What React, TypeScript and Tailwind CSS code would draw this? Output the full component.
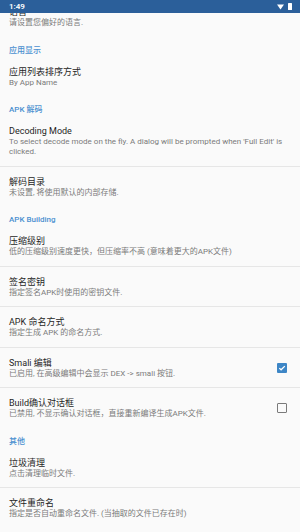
interface Pref {
  title: string;
  summary: string;
  checkbox?: "on" | "off";
}

interface Group {
  category?: string;
  items: Pref[];
}

const groups: Group[] = [
  {
    items: [{ title: "语言", summary: "请设置您偏好的语言." }],
  },
  {
    category: "应用显示",
    items: [{ title: "应用列表排序方式", summary: "By App Name" }],
  },
  {
    category: "APK 解码",
    items: [
      {
        title: "Decoding Mode",
        summary:
          "To select decode mode on the fly. A dialog will be prompted when 'Full Edit' is clicked.",
      },
      { title: "解码目录", summary: "未设置, 将使用默认的内部存储." },
    ],
  },
  {
    category: "APK Building",
    items: [
      { title: "压缩级别", summary: "低的压缩级别速度更快，但压缩率不高 (意味着更大的APK文件)" },
      { title: "签名密钥", summary: "指定签名APK时使用的密钥文件." },
      { title: "APK 命名方式", summary: "指定生成 APK 的命名方式." },
      { title: "Smali 编辑", summary: "已启用, 在高级编辑中会显示 DEX -> smali 按钮.", checkbox: "on" },
      { title: "Build确认对话框", summary: "已禁用, 不显示确认对话框，直接重新编译生成APK文件.", checkbox: "off" },
    ],
  },
  {
    category: "其他",
    items: [
      { title: "垃圾清理", summary: "点击清理临时文件." },
      { title: "文件重命名", summary: "指定是否自动重命名文件. (当抽取的文件已存在时)" },
    ],
  },
];

function CheckBox({ on }: { on: boolean }) {
  if (on) {
    return (
      <div className="w-[10px] h-[10px] rounded-[1px] bg-[#3d86c6] flex items-center justify-center">
        <svg width="8" height="8" viewBox="0 0 8 8">
          <path d="M1.3 4.1 L3.1 5.8 L6.8 2.1" stroke="#fff" strokeWidth="1.3" fill="none" />
        </svg>
      </div>
    );
  }
  return <div className="w-[10px] h-[10px] rounded-[1px] border-[1.5px] border-[#7a7a7a]" />;
}

function PrefRow({ pref }: { pref: Pref }) {
  return (
    <div className="flex items-center pl-[9px] pr-[13px] pt-[9px] pb-[8.5px]">
      <div className="flex-1 min-w-0">
        <div className="text-[9px] leading-[12px] text-[#1f1f1f]">{pref.title}</div>
        <div className="text-[8px] leading-[10px] text-[#7a7a7a]">{pref.summary}</div>
      </div>
      {pref.checkbox && (
        <div className="ml-3 shrink-0">
          <CheckBox on={pref.checkbox === "on"} />
        </div>
      )}
    </div>
  );
}

export default function App() {
  return (
    <div
      className="w-[300px] h-[532px] overflow-hidden bg-[#fafafa] flex flex-col"
      style={{ fontFamily: "Roboto, 'Noto Sans CJK SC', sans-serif" }}
    >
      <div className="h-[13px] shrink-0 bg-[#2b5f9a] flex items-center justify-between pl-[9px] pr-[8px]">
        <span className="text-[8px] font-semibold text-white leading-none">1:49</span>
        <div className="flex items-center gap-[4px]">
          <svg width="7" height="6" viewBox="0 0 7 6">
            <path d="M0 0.5 H7 L3.5 5.5 Z" fill="#fff" />
          </svg>
          <div className="w-[4px] h-[7px] bg-white rounded-[0.5px]" />
        </div>
      </div>

      {/* list is scrolled a little, so the first row sits partly off the top */}
      <div className="flex-1 overflow-hidden">
        <div className="-mt-[16px]">
          {groups.map((g, gi) => (
            <div key={gi}>
              {g.category && (
                <div className="pl-[9px] pt-[9px] pb-[1px] text-[8px] leading-[10px] font-medium text-[#4a90d0]">
                  {g.category}
                </div>
              )}
              {g.items.map((p, i) => (
                <div key={i}>
                  <PrefRow pref={p} />
                  {i < g.items.length - 1 && <div className="h-px bg-[#e6e6e6]" />}
                </div>
              ))}
            </div>
          ))}
        </div>
      </div>
    </div>
  );
}
